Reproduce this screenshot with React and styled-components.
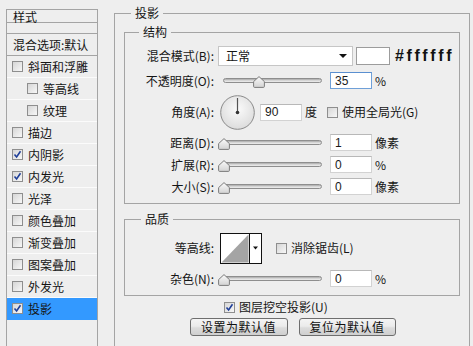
import React from "react";
import styled, { createGlobalStyle } from "styled-components";

const GlobalStyle = createGlobalStyle`
  html, body {
    margin: 0;
    padding: 0;
    background: #eeeeee;
    overflow: hidden;
  }
  body {
    font-family: "Noto Sans CJK SC", "Liberation Sans", sans-serif;
    font-size: 12px;
    color: #151515;
  }
`;

const styleItems = [
  { name: "斜面和浮雕" },
  { name: "等高线", sub: true },
  { name: "纹理", sub: true },
  { name: "描边" },
  { name: "内阴影", checked: true },
  { name: "内发光", checked: true },
  { name: "光泽" },
  { name: "颜色叠加" },
  { name: "渐变叠加" },
  { name: "图案叠加" },
  { name: "外发光" },
  { name: "投影", checked: true, active: true },
];

function Check({ checked }) {
  return (
    <Box>
      {checked && (
        <svg width="9" height="9" viewBox="0 0 9 9">
          <path d="M1.5 4.5 L3.6 7 L7.5 1.2" fill="none" stroke="#1f3f99" strokeWidth="1.6" />
        </svg>
      )}
    </Box>
  );
}

function Slider({ pos }) {
  return (
    <SliderBox>
      <Track />
      <Thumb style={{ left: pos * 99 }}>
        <svg width="12" height="12" viewBox="0 0 12 12">
          <defs>
            <linearGradient id="tg" x1="0" y1="0" x2="0" y2="1">
              <stop offset="0" stopColor="#fbfbfb" />
              <stop offset="1" stopColor="#d2d2d2" />
            </linearGradient>
          </defs>
          <path d="M6 0.6 L11.4 5.6 L11.4 10.4 Q11.4 11.4 10.4 11.4 L1.6 11.4 Q0.6 11.4 0.6 10.4 L0.6 5.6 Z" fill="url(#tg)" stroke="#7b7b7b" />
        </svg>
      </Thumb>
    </SliderBox>
  );
}

function App() {
  return (
    <Page>
      <GlobalStyle />
      <StylePanel>
        <PanelHeader>样式</PanelHeader>
        <PanelGap />
        <BlendOption>混合选项:默认</BlendOption>
        {styleItems.map((s) => (
          <StyleRow key={s.name} sub={s.sub} active={s.active}>
            <Check checked={s.checked} />
            <span>{s.name}</span>
          </StyleRow>
        ))}
      </StylePanel>

      <OuterGroup>
        <Legend left={16}>投影</Legend>

        <InnerGroup>
          <Legend left={14}>结构</Legend>
          <Row h={20} mt={6}>
            <Label>混合模式(B):</Label>
            <Select>
              <span>正常</span>
              <Arrow />
            </Select>
            <Swatch />
            <HexText>#ffffff</HexText>
          </Row>
          <Row h={17} mt={6}>
            <Label>不透明度(O):</Label>
            <Slider pos={0.35} />
            <NumInput focused defaultValue="35" readOnly />
            <Unit>%</Unit>
          </Row>
          <Row h={34} mt={6}>
            <Label>角度(A):</Label>
            <Dial>
              <svg width="35" height="35" viewBox="0 0 35 35">
                <defs>
                  <radialGradient id="dg" cx="0.5" cy="0.4" r="0.6">
                    <stop offset="0" stopColor="#fbfbfb" />
                    <stop offset="1" stopColor="#dcdcdc" />
                  </radialGradient>
                </defs>
                <circle cx="17.5" cy="17.5" r="16.8" fill="url(#dg)" stroke="#8a8a8a" />
                <line x1="17.5" y1="17.5" x2="17.5" y2="3" stroke="#555" strokeWidth="1.2" />
                <circle cx="17.5" cy="17.5" r="1.8" fill="#333" />
              </svg>
            </Dial>
            <NumInput defaultValue="90" readOnly />
            <Unit>度</Unit>
            <CheckLabel ml={10}>
              <Check />
              <span>使用全局光(G)</span>
            </CheckLabel>
          </Row>
          <Row h={17} mt={5}>
            <Label>距离(D):</Label>
            <Slider pos={0} />
            <NumInput defaultValue="1" readOnly />
            <Unit>像素</Unit>
          </Row>
          <Row h={17} mt={5}>
            <Label>扩展(R):</Label>
            <Slider pos={0} />
            <NumInput defaultValue="0" readOnly />
            <Unit>%</Unit>
          </Row>
          <Row h={17} mt={5}>
            <Label>大小(S):</Label>
            <Slider pos={0} />
            <NumInput defaultValue="0" readOnly />
            <Unit>像素</Unit>
          </Row>
          <GroupEnd h={8} />
        </InnerGroup>

        <InnerGroup mt={7}>
          <Legend left={16}>品质</Legend>
          <Row h={30} mt={6}>
            <Label>等高线:</Label>
            <Contour>
              <svg width="42" height="31" viewBox="0 0 42 31">
                <rect x="0.5" y="0.5" width="41" height="30" fill="#fff" stroke="#111" />
                <polygon points="1.5,29.5 28.5,1.5 28.5,29.5" fill="#a4a4a4" />
                <line x1="29.5" y1="1" x2="29.5" y2="30" stroke="#111" />
                <polygon points="33,13.5 38,13.5 35.5,16.5" fill="#111" />
              </svg>
            </Contour>
            <CheckLabel ml={14}>
              <Check />
              <span>消除锯齿(L)</span>
            </CheckLabel>
          </Row>
          <Row h={17} mt={7}>
            <Label>杂色(N):</Label>
            <Slider pos={0} />
            <NumInput defaultValue="0" readOnly />
            <Unit>%</Unit>
          </Row>
          <GroupEnd h={8} />
        </InnerGroup>

        <KnockoutRow>
          <CheckLabel>
            <Check checked />
            <span>图层挖空投影(U)</span>
          </CheckLabel>
        </KnockoutRow>

        <ButtonRow>
          <Button w={98}>设置为默认值</Button>
          <Button w={97}>复位为默认值</Button>
        </ButtonRow>
      </OuterGroup>
    </Page>
  );
}

const Page = styled.div`
  display: flex;
  align-items: flex-start;
  box-sizing: border-box;
  height: 346px;
  padding: 5px 0 0 6px;
  overflow: hidden;
`;

const StylePanel = styled.div`
  width: 92px;
  height: 337px;
  margin-top: 4px;
  box-sizing: border-box;
  border: 1px solid #a4a4a4;
  border-bottom: none;
  display: flex;
  flex-direction: column;
  flex-shrink: 0;
`;

const PanelHeader = styled.div`
  height: 12px;
  line-height: 14px;
  padding-left: 6px;
  border-bottom: 1px solid #a4a4a4;
  overflow: visible;
`;

const PanelGap = styled.div`
  height: 10px;
  border-bottom: 1px solid #a4a4a4;
`;

const BlendOption = styled.div`
  height: 21px;
  line-height: 21px;
  padding-left: 6px;
  border-bottom: 1px solid #a4a4a4;
  white-space: nowrap;
`;

const StyleRow = styled.div`
  height: 21px;
  display: flex;
  align-items: center;
  gap: 5px;
  padding-left: ${(p) => (p.sub ? 20 : 5)}px;
  background: ${(p) => (p.active ? "#3399ff" : "transparent")};
  border-bottom: 1px solid ${(p) => (p.active ? "#3399ff" : "#fbfbfb")};
  white-space: nowrap;
  line-height: 16px;
`;

const Box = styled.span`
  width: 11px;
  height: 11px;
  box-sizing: border-box;
  border: 1px solid #8e8e8e;
  background: linear-gradient(135deg, #d6d6d6, #f7f7f7);
  display: inline-flex;
  align-items: center;
  justify-content: center;
  flex-shrink: 0;
`;

const OuterGroup = styled.fieldset`
  margin: 0 0 0 16px;
  padding: 0;
  width: 356px;
  height: 341px;
  box-sizing: border-box;
  border: 1px solid #a4a4a4;
  border-bottom: none;
  min-width: 0;
  flex-shrink: 0;
`;

const InnerGroup = styled.fieldset`
  margin: ${(p) => p.mt ?? 3}px 9px 0 9px;
  padding: 0;
  border: 1px solid #a4a4a4;
  min-width: 0;
  display: flex;
  flex-direction: column;
`;

const Legend = styled.legend`
  margin-left: ${(p) => p.left}px;
  padding: 0 4px;
  line-height: 16px;
  font-size: 12px;
`;

const Row = styled.div`
  display: flex;
  align-items: center;
  height: ${(p) => p.h}px;
  margin-top: ${(p) => p.mt}px;
  line-height: 16px;
  white-space: nowrap;
`;

const GroupEnd = styled.div`
  height: ${(p) => p.h}px;
`;

const Label = styled.span`
  width: 89px;
  margin-right: 4px;
  text-align: right;
  flex-shrink: 0;
`;

const Select = styled.div`
  width: 135px;
  height: 20px;
  box-sizing: border-box;
  background: #fff;
  border: 1px solid #c6c6c6;
  display: flex;
  align-items: center;
  justify-content: space-between;
  padding: 0 5px 0 7px;
`;

const Arrow = styled.span`
  width: 0;
  height: 0;
  border-left: 4px solid transparent;
  border-right: 4px solid transparent;
  border-top: 4px solid #111;
`;

const Swatch = styled.div`
  width: 34px;
  height: 18px;
  box-sizing: border-box;
  margin-left: 3px;
  background: #fff;
  border: 1px solid #9c9c9c;
`;

const HexText = styled.span`
  margin-left: 5px;
  font-family: "Liberation Sans", Arial, sans-serif;
  font-weight: bold;
  font-size: 16px;
  letter-spacing: 2.6px;
  color: #111;
`;

const SliderBox = styled.div`
  position: relative;
  width: 104px;
  height: 17px;
  flex-shrink: 0;
`;

const Track = styled.div`
  position: absolute;
  left: 5px;
  right: 0;
  top: 6px;
  height: 5px;
  box-sizing: border-box;
  border: 1px solid #8e8e8e;
  border-radius: 3px;
  background: linear-gradient(to bottom, #a8a8a8, #dedede 60%, #ececec);
`;

const Thumb = styled.div`
  position: absolute;
  top: 4px;
  width: 12px;
  height: 12px;
  line-height: 0;
`;

const NumInput = styled.input`
  width: 42px;
  height: 17px;
  box-sizing: border-box;
  margin: 0 0 0 5px;
  padding: 0 0 0 4px;
  background: #fff;
  border: 1px solid ${(p) => (p.focused ? "#6fa0d8" : "#d2d2d2")};
  border-top-color: ${(p) => (p.focused ? "#5a8fd0" : "#b8b8b8")};
  font-family: "Liberation Sans", Arial, sans-serif;
  font-size: 12px;
  color: #1a1a1a;
  outline: none;
  flex-shrink: 0;
  ${SliderBox} + & {
    margin-left: 8px;
  }
`;

const Unit = styled.span`
  margin-left: 3px;
`;

const Dial = styled.div`
  width: 35px;
  height: 35px;
  margin-left: 2px;
  line-height: 0;
  flex-shrink: 0;
`;

const CheckLabel = styled.label`
  display: flex;
  align-items: center;
  gap: 4px;
  margin-left: ${(p) => p.ml ?? 0}px;
`;

const Contour = styled.div`
  width: 42px;
  height: 31px;
  margin-left: 2px;
  line-height: 0;
  flex-shrink: 0;
`;

const KnockoutRow = styled.div`
  display: flex;
  height: 16px;
  align-items: center;
  margin: 3px 0 0 109px;
  line-height: 16px;
  white-space: nowrap;
`;

const ButtonRow = styled.div`
  display: flex;
  justify-content: center;
  gap: 11px;
  margin-top: 3px;
  padding-left: 1px;
`;

const Button = styled.button`
  width: ${(p) => p.w}px;
  height: 18px;
  padding: 0;
  border: 1px solid #6e6e6e;
  border-radius: 3px;
  background: linear-gradient(to bottom, #f4f4f4, #ebebeb 45%, #dcdcdc 55%, #cfcfcf);
  font-family: "Noto Sans CJK SC", sans-serif;
  font-size: 12px;
  line-height: 16px;
  color: #111;
  letter-spacing: 0.5px;
`;

export default App;
